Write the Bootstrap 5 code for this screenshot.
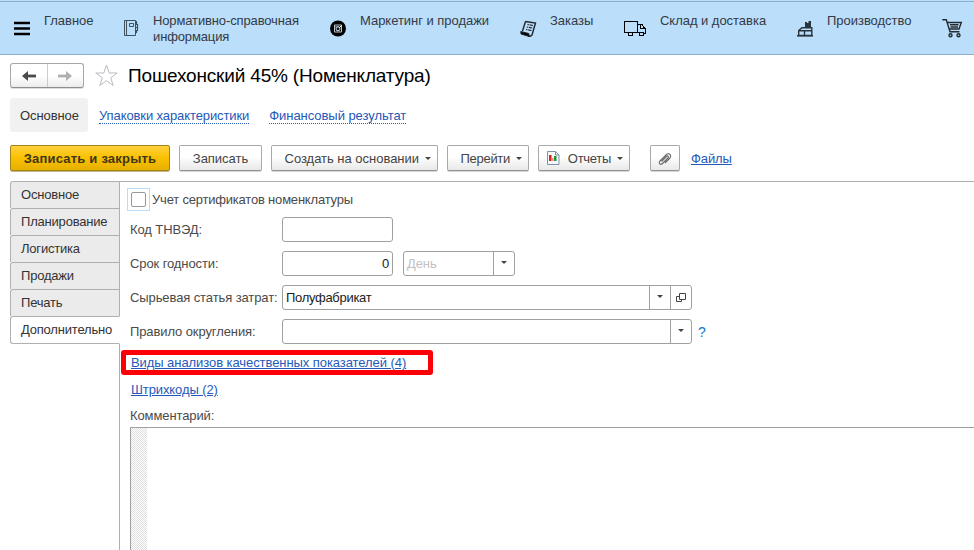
<!DOCTYPE html>
<html lang="ru">
<head>
<meta charset="utf-8">
<meta name="viewport" content="width=device-width, initial-scale=1">
<title>Пошехонский 45% (Номенклатура)</title>
<link href="https://cdn.jsdelivr.net/npm/bootstrap@5.3.0/dist/css/bootstrap.min.css" rel="stylesheet">
<style>
body{font-family:"Liberation Sans",Arial,sans-serif;font-size:13px;line-height:16px;letter-spacing:-.1px;color:#4a4a4a;background:#fff;height:550px;overflow:hidden}
svg{display:block;flex:none}
a{color:#2459b8}
.sections{display:grid;grid-template-columns:109px 207px 190px 104px 173px 145px 32px;height:54px;margin-top:1px;padding:11px 0 0 14px;background:#bbdefb;border-top:1px solid #8aaecb;border-bottom:1px solid #8aaecb;box-shadow:0 -1px #bbdefb;color:#333a44;letter-spacing:-.03px}
.sections .pic{width:30px;padding-top:6px;flex:none}
.sections .pic-wide{width:36px}
.sections .pic-cart{padding-top:5px}
.s-ref{letter-spacing:-.13px}
.title-row{height:25px;margin-top:8px;padding-left:10px}
.history{width:74px;height:25px;border:1px solid #a8a8a8;border-bottom-color:#8e8e8e;border-radius:3px;background:linear-gradient(#fff 50%,#ececec);box-shadow:0 1px #ddd}
.history span+span{border-left:1px solid #ccc}
.page-title{font-size:19px;line-height:24px;color:#000;letter-spacing:-.17px;margin:0 0 0 10px;font-weight:400}
.views{margin-top:10px;height:34px;padding-left:10px}
.view-on{width:78px;height:34px;background:#f1f1f1;border-radius:3px;color:#333;padding:1px 0 0 1px}
.views a{border-bottom:1px dotted #2459b8;line-height:14px;margin-top:2px}
.view-pack{margin-left:11px}
.view-fin{margin-left:20px;letter-spacing:-.05px}
.tools{margin-top:13px;padding-left:10px;height:27px}
.tool{height:26px;padding:1px 0 0;border:1px solid #a9a9a9;border-bottom-color:#939393;border-radius:2px;background:linear-gradient(#fff 45%,#e8e8e8);box-shadow:0 1px #d5d5d5;font-size:13px;line-height:16px;letter-spacing:-.02px;color:#444;display:flex;align-items:center;justify-content:center}
.tool-main{width:160px;border-color:#a5831b;background:linear-gradient(#ffd13e,#fac000 50%,#e6b000);font-weight:700;color:#413619;box-shadow:0 1px #c9b98a;letter-spacing:.2px}
.tool-save{width:83px;margin-left:1px}
.tool-menu{margin-left:1px;padding-right:6px;justify-content:flex-end;gap:6px}
.tool-create{width:167px}
.tool-go{width:82px;letter-spacing:-.3px}
.tool-reports{width:92px;letter-spacing:-.3px}
.tool-reports svg{margin:0 2px 2px 0}
.tool-clip{width:30px;margin-left:20px}
.files{margin-left:11px}
.caret{width:0;height:0;border:3px solid transparent;border-top:3px solid #444;border-bottom:0}
.work{margin-top:9px;padding-left:10px;height:369px}
.sidetabs{width:110px;margin-right:-1px;z-index:1}
.sidetab{height:27px;border:1px solid #b0b0b0;border-bottom:0;border-radius:3px 0 0 0;background:#ebebeb;color:#333;padding:5px 0 0 10px;white-space:nowrap;letter-spacing:-.2px}
.sidetab-on{background:#fff;border-right-color:#fff;border-bottom:1px solid #b0b0b0;height:28px;border-radius:3px 0 0 3px}
.panel{border-left:1px solid #b0b0b0;border-top:1px solid #b0b0b0;padding:6px 0 0 10px}
.check-row{margin-bottom:6px}
.check-wrap{width:23px;height:23px;border:1px solid #b9dcf8;margin:0 2px 0 -3px}
.check-box{width:15px;height:15px;border:1px solid #999;border-radius:2px}
.check-text{letter-spacing:-.2px}
.line{height:25px;margin-bottom:9px}
.line label{width:152px;white-space:nowrap}
.fld{height:25px;border:1px solid #a0a0a0;border-radius:3px;color:#222;overflow:hidden}
.fld .txt{padding:0 3px;letter-spacing:-.3px}
.fld .cell{width:21px;border-left:1px solid #a0a0a0}
.fld .caret{margin-bottom:2px}
.fld-num{width:111px}.fld-wide{width:410px}
.fld-unit{width:112px;margin-left:10px}
.fld-unit .txt{color:#c4c0c4;letter-spacing:-.1px}
.ask{color:#1478c8;margin-left:6px;font-size:14px}
.hot{width:312px;height:25px;border:5px solid #fb0007;border-radius:3px;margin:-3px 0 0 -9px;padding-left:5px;line-height:16px;letter-spacing:-.07px}
.codes{margin:7px 0 0 1px}
.memo-cap{margin-top:10px}
.memo{height:130px;margin-top:3px;border:1px solid #a0a0a0;border-right:0;border-bottom:0}
.gutter{width:16px;background:repeating-conic-gradient(#dedede 0 25%,#fff 0 50%) 0 0/2px 2px}
</style>
<script src="https://cdn.jsdelivr.net/npm/bootstrap@5.3.0/dist/js/bootstrap.bundle.min.js"></script>
</head>
<body>
<nav class="sections">
  <div class="d-flex"><span class="pic"><svg width="16" height="18"><path d="M0 4h16M0 9.500h16M0 15h16" stroke="#000" stroke-width="2.400"/></svg></span><span>Главное</span></div>
  <div class="d-flex"><span class="pic"><svg width="17" height="18" fill="none" stroke="#3e4f5e"><path d="M1.500 1.500h11v15h-11zM3.500 1.500v15M6.500 4.500h4v3h-4z"/><path d="M12.500 2.500h1v3h-1M12.500 5.500h2v3h-2M12.500 8.500h2v3h-2M12.500 11.500h1v2h-1" stroke-width="1.200"/></svg></span><span class="s-ref">Нормативно-справочная<br>информация</span></div>
  <div class="d-flex"><span class="pic"><svg width="17" height="18"><circle cx="8" cy="9.500" r="8"/><path d="M4.500 6h7v7h-7z" fill="none" stroke="#b9c5d0"/><path d="M5 6.500h4v2H5z" fill="#55606a"/><circle cx="8" cy="9.800" r="2" fill="#111" stroke="#dce8f2"/><path d="M9 9l2.500-2.500" stroke="#fff"/></svg></span><span>Маркетинг и продажи</span></div>
  <div class="d-flex"><span class="pic"><svg width="17" height="18" fill="none" stroke="#20262c"><path d="M5.500 2.500l10 1.500-3.500 12-2 1.500-2-1M5.500 2.500L2.500 12" stroke-width="1.400"/><path d="M.8 12.500l8 2 .5 3L1 15z" fill="#000"/><path d="M7.500 5.500l5.500 1M6.700 8l5.500 1M6 10.500l5.500 1" stroke-width="1.200" stroke-dasharray="1.500 .7 4 0"/></svg></span><span>Заказы</span></div>
  <div class="d-flex"><span class="pic pic-wide"><svg width="23" height="18" fill="none" stroke="#000" shape-rendering="crispEdges"><path d="M4 13.500H.5v-11h13v11H9M13.500 5.500h5l1 3 2 1v5h-2M15.500 13.500h-2M16.500 6v3h3"/><circle cx="6.500" cy="15" r="2"/><circle cx="17.500" cy="15" r="2"/></svg></span><span>Склад и доставка</span></div>
  <div class="d-flex"><span class="pic"><svg width="17" height="18"><path d="M1.700 16.500V11.500L5 8.700h9.800v7.800zM2 11.800h13M7.500 12v4.500" fill="none" stroke="#2a343d" stroke-width="1.400"/><path d="M0 16h16v1.500H0zM8 3h2v1h1.500V2h2.500v7H8z" fill="#2a343d"/></svg></span><span>Производство</span></div>
  <div class="d-flex"><span class="pic pic-cart"><svg width="21" height="21" fill="none" stroke="#222a30" stroke-width="1.400"><path d="M.3 1.700h4L8 13.700h9.500M5 4.500h14.300L17 11H7.500M8 6.800h8.500M8.500 9h7.500"/><circle cx="8.500" cy="17.300" r="1.500"/><circle cx="16.500" cy="17.300" r="1.500"/></svg></span></div>
</nav>
<header class="title-row d-flex align-items-center">
  <div class="history d-flex">
    <span class="flex-fill d-flex align-items-center justify-content-center"><svg width="14" height="10"><path d="M3 5h11" stroke="#4a4a4a" stroke-width="2.800"/><path d="M0 5L6 0v10z" fill="#4a4a4a"/></svg></span>
    <span class="flex-fill d-flex align-items-center justify-content-center"><svg width="14" height="10"><path d="M0 5h11" stroke="#b0b0b0" stroke-width="2.800"/><path d="M14 5L8 0v10z" fill="#b0b0b0"/></svg></span>
  </div>
  <svg class="ms-2" width="26" height="24" viewBox="0 0 26 24"><path d="M14.500 1l2.700 8h8l-6.500 4.800 2.500 7.700-6.700-4.800L7.800 21.500l2.500-7.700L3.800 9h8z" fill="#fff" stroke="#b7bcc2"/></svg>
  <h1 class="page-title">Пошехонский 45% (Номенклатура)</h1>
</header>
<div class="views d-flex align-items-center">
  <span class="view-on d-flex align-items-center justify-content-center">Основное</span>
  <a class="view-pack text-decoration-none" href="#">Упаковки характеристики</a>
  <a class="view-fin text-decoration-none" href="#">Финансовый результат</a>
</div>
<div class="tools d-flex">
  <button class="btn tool tool-main me-2">Записать и закрыть</button>
  <button class="btn tool tool-save me-2">Записать</button>
  <button class="btn tool tool-menu tool-create me-2"><span>Создать на основании</span><i class="caret"></i></button>
  <button class="btn tool tool-menu tool-go me-2"><span>Перейти</span><i class="caret"></i></button>
  <button class="btn tool tool-menu tool-reports"><svg width="13" height="14"><path d="M.5.500h8l3.500 3.500v9.500H.5z" fill="#f4f8fb" stroke="#7d92a5"/><path d="M8.500.500V4H12" fill="none" stroke="#7d92a5"/><path d="M2 4h2.500v6H2z" fill="#e02020"/><path d="M4.500 7h2v3h-2z" fill="#e88"/><path d="M7 5h2.500v5H7z" fill="#1d9a2d"/></svg><span>Отчеты</span><i class="caret"></i></button>
  <button class="btn tool tool-clip"><svg width="14" height="14" viewBox="0 0 14 14" fill="none" stroke="#666" stroke-width="1.100"><path d="M3.500 9.500l5-5c1.300-1.300 2.800.2 1.500 1.500l-5.500 5.500c-2 2-4.500-.5-2.500-2.500L8 3c3-3 6.500.5 3.500 3.500L7 11"/></svg></button>
  <a class="files align-self-center" href="#">Файлы</a>
</div>
<main class="work d-flex">
  <div class="sidetabs position-relative">
    <div class="sidetab">Основное</div>
    <div class="sidetab">Планирование</div>
    <div class="sidetab">Логистика</div>
    <div class="sidetab">Продажи</div>
    <div class="sidetab">Печать</div>
    <div class="sidetab sidetab-on">Дополнительно</div>
  </div>
  <section class="panel flex-fill">
    <div class="check-row d-flex align-items-center">
      <span class="check-wrap d-flex align-items-center justify-content-center"><span class="check-box"></span></span>
      <span class="check-text">Учет сертификатов номенклатуры</span>
    </div>
    <div class="line d-flex align-items-center"><label>Код ТНВЭД:</label><div class="fld fld-num"></div></div>
    <div class="line d-flex align-items-center"><label>Срок годности:</label>
      <div class="fld fld-num d-flex align-items-center justify-content-end"><span class="txt">0</span></div>
      <div class="fld fld-unit d-flex align-items-center"><span class="txt flex-fill">День</span><span class="cell h-100 d-flex align-items-center justify-content-center"><i class="caret"></i></span></div>
    </div>
    <div class="line d-flex align-items-center"><label>Сырьевая статья затрат:</label>
      <div class="fld fld-wide d-flex align-items-center"><span class="txt flex-fill">Полуфабрикат</span><span class="cell h-100 d-flex align-items-center justify-content-center"><i class="caret"></i></span><span class="cell h-100 d-flex align-items-center justify-content-center"><svg width="10" height="10" fill="none" stroke="#444"><path d="M3.500.500h6v6h-6zM3.500 3.500h-3v5h5v-2"/></svg></span></div>
    </div>
    <div class="line d-flex align-items-center"><label>Правило округления:</label>
      <div class="fld fld-wide d-flex align-items-center"><span class="txt flex-fill"></span><span class="cell h-100 d-flex align-items-center justify-content-center"><i class="caret"></i></span></div>
      <span class="ask">?</span>
    </div>
    <div class="hot"><a href="#">Виды анализов качественных показателей (4)</a></div>
    <div class="codes"><a href="#">Штрихкоды (2)</a></div>
    <div class="memo-cap">Комментарий:</div>
    <div class="memo d-flex"><span class="gutter"></span></div>
  </section>
</main>
</body>
</html>
